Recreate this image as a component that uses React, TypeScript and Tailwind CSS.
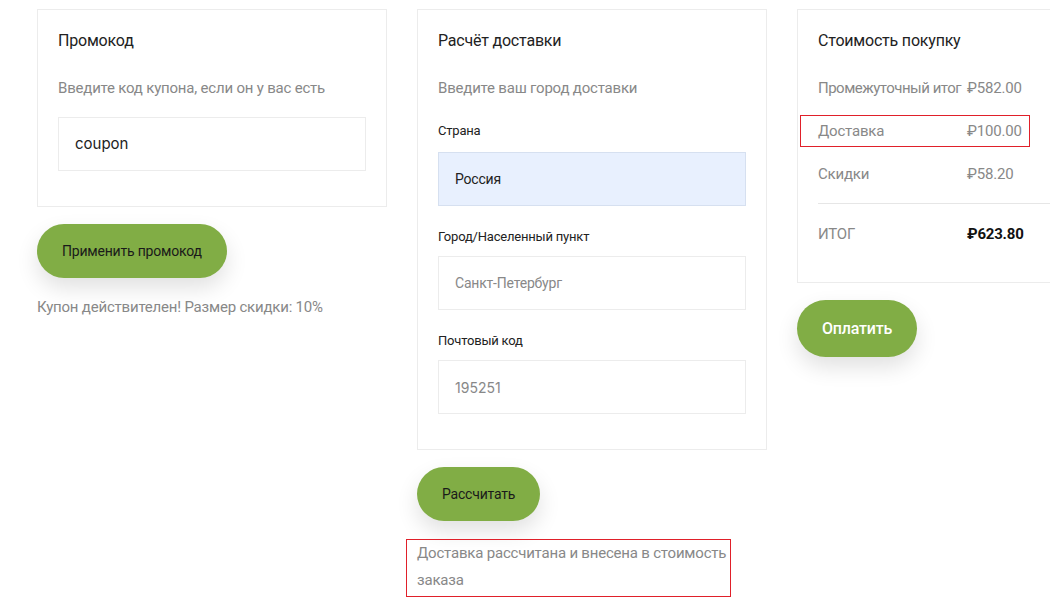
import React from "react";

const btn =
  "inline-flex items-center justify-center rounded-full bg-[#81ad45] px-[25px] h-[54px] shadow-[0_10px_22px_rgba(0,0,0,0.12)]";

export default function App() {
  return (
    <div
      className="w-[1050px] h-[600px] overflow-hidden bg-white tracking-[-0.2px]"
      style={{ fontFamily: "Roboto, 'Liberation Sans', sans-serif" }}
    >
      <div className="flex gap-[30px] pl-[37px] pt-[9px] items-start">
        {/* Column 1 */}
        <div className="w-[350px] shrink-0 flex flex-col items-start">
          <div className="w-[350px] border border-[#ececec] px-5 pt-[19px] pb-[35px]">
            <div className="text-[16px] leading-[24px] text-[#222]">Промокод</div>
            <div className="mt-[23px] text-[15px] leading-[24px] text-[#888]">
              Введите код купона, если он у вас есть
            </div>
            <div
              className="mt-[17px] h-[54px] border border-[#ececec] px-4 flex items-center text-[15px] text-[#222] tracking-normal"
              style={{ fontFamily: "Inter, 'Liberation Sans', sans-serif" }}
            >
              coupon
            </div>
          </div>
          <div className={`${btn} mt-[17px] text-[14px] text-[#1a1a1a]`}>Применить промокод</div>
          <div className="mt-[17px] text-[15px] leading-[24px] text-[#888]">
            Купон действителен! Размер скидки: 10%
          </div>
        </div>

        {/* Column 2 */}
        <div className="w-[350px] shrink-0 flex flex-col items-start">
          <div className="w-[350px] border border-[#ececec] px-5 pt-[19px] pb-[35px]">
            <div className="text-[16px] leading-[24px] text-[#222]">Расчёт доставки</div>
            <div className="mt-[23px] text-[15px] leading-[24px] text-[#888]">
              Введите ваш город доставки
            </div>
            <div className="mt-[21px] text-[13px] leading-[20px] text-[#222]">Страна</div>
            <div className="mt-[11px] h-[54px] border border-[#d6e0f0] bg-[#e8f0fe] px-4 flex items-center text-[14px] text-[#222]">
              Россия
            </div>
            <div className="mt-[21px] text-[13px] leading-[20px] text-[#222]">Город/Населенный пункт</div>
            <div className="mt-[9px] h-[54px] border border-[#ececec] px-4 flex items-center text-[14px] text-[#888]">
              Санкт-Петербург
            </div>
            <div className="mt-[21px] text-[13px] leading-[20px] text-[#222]">Почтовый код</div>
            <div
              className="mt-[9px] h-[54px] border border-[#ececec] px-4 flex items-center text-[14px] text-[#888] tracking-normal"
              style={{ fontFamily: "Inter, 'Liberation Sans', sans-serif" }}
            >
              195251
            </div>
          </div>
          <div className={`${btn} mt-[17px] text-[14px] text-[#1a1a1a]`}>Рассчитать</div>
          <div className="mt-[18px] -ml-[11px] w-[325px] border border-[#e0202a] pl-[10px] pb-[2px] text-[15px] leading-[27px] text-[#888]">
            Доставка рассчитана и внесена в стоимость заказа
          </div>
        </div>

        {/* Column 3 */}
        <div className="w-[350px] shrink-0 flex flex-col items-start">
          <div className="w-[350px] border border-[#ececec] px-5 pt-[19px] pb-[36px]">
            <div className="text-[16px] leading-[24px] text-[#222]">Стоимость покупку</div>
            <div className="mt-[23px] flex text-[15px] leading-[24px] text-[#888]">
              <div className="w-[149px] whitespace-nowrap tracking-[-0.5px]">Промежуточный итог</div>
              <div>₽582.00</div>
            </div>
            <div className="mt-[15px] -ml-[18px] w-[230px] border border-[#e0202a] pl-[17px] py-[3px] flex text-[15px] leading-[24px] text-[#888]">
              <div className="w-[149px]">Доставка</div>
              <div>₽100.00</div>
            </div>
            <div className="mt-[15px] flex text-[15px] leading-[24px] text-[#888]">
              <div className="w-[149px]">Скидки</div>
              <div>₽58.20</div>
            </div>
            <div className="mt-[17px] h-px bg-[#e6e6e6]" />
            <div className="mt-[18px] flex text-[15px] leading-[24px] text-[#888]">
              <div className="w-[149px]">ИТОГ</div>
              <div className="font-bold text-[#111]">₽623.80</div>
            </div>
          </div>
          <div className={`${btn} mt-[17px] h-[57px] text-[16px] font-medium text-white`}>Оплатить</div>
        </div>
      </div>
    </div>
  );
}
